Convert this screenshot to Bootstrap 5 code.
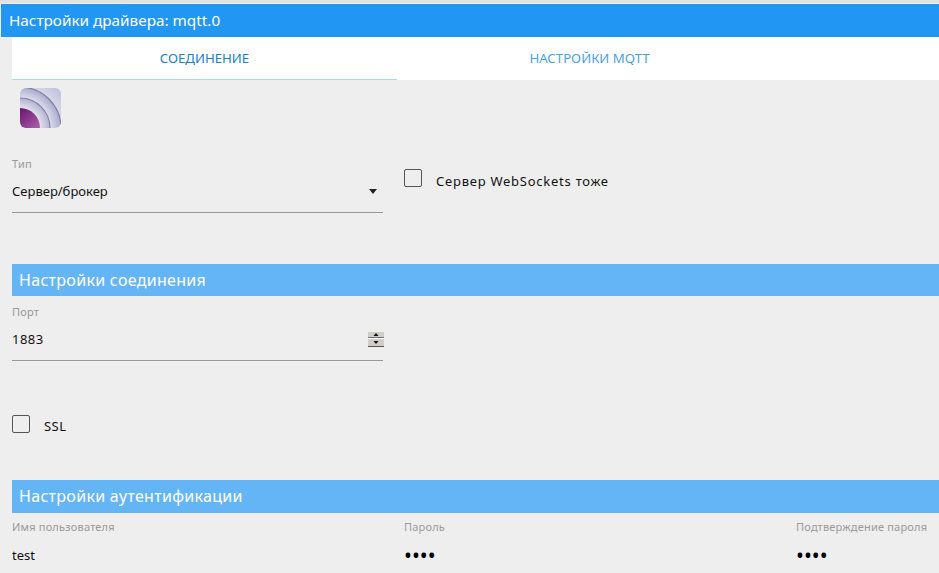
<!DOCTYPE html>
<html lang="ru">
<head>
<meta charset="utf-8">
<title>Настройки драйвера: mqtt.0</title>
<link rel="stylesheet" href="https://cdn.jsdelivr.net/npm/bootstrap@5.3.0/dist/css/bootstrap.min.css">
<style>
html,body{height:573px;overflow:hidden}
body{background:#eeeeee;font-family:"Noto Sans","Open Sans",sans-serif;color:#111;border-top:3px solid #e2e2e2;padding-top:1px}
.dlg-title{margin-left:1px;height:33px;background:#2196f3;color:#fff;font-size:15.3px;line-height:33px;padding-left:8px}
.tab-bar{margin-left:12px;height:43px;background:#fff}
.tab-item{width:385px;height:43px;line-height:42px;text-align:center;font-size:13.2px;color:#4aa3e4}
.tab-item.on{color:#1a80c8;border-bottom:1px solid #a8daf5}
.logo-box{margin:8px 0 0 20px;width:41px;height:40px;display:block}
.pad-left{padding-left:12px}
.fld{width:371px;flex:none;margin-right:21px;position:relative}
.fld-end{width:auto;flex:1 1 0;margin-right:0;min-width:0}
.fld-label{font-size:11px;line-height:14px;color:#9a9a9a;letter-spacing:.2px}
.fld-val{font-size:13px;line-height:18px;color:#111;margin-top:11px;padding-bottom:12px}
.fld-line{border-bottom:1px solid #999}
.dots{font-size:21px;line-height:18px;letter-spacing:0;color:#000}
.num-val{letter-spacing:.5px}
.arrow{position:absolute;right:6px;top:32px;width:0;height:0;border-left:4.5px solid transparent;border-right:4.5px solid transparent;border-top:5px solid #222}
.spin{position:absolute;right:-1px;top:26px;width:16px;height:16px;display:block}
.box{width:18px;height:18px;border:1px solid #555;border-radius:2px;flex:none;background:transparent}
.chk-text{font-size:13px;letter-spacing:.75px;color:#111;line-height:18px;margin-left:14px}
.ws-text{margin-top:3px}
.ssl-text{margin-top:2px;letter-spacing:.45px}
.sect{margin-left:12px;background:#64b5f6;color:#fff;font-size:16px;letter-spacing:.3px;padding-left:7px}
.row-type{margin-top:29px}
.chk-ws{margin-top:12px}
.sect-one{margin-top:51px;height:32px;line-height:32px}
.row-port{margin-top:9px}
.chk-ssl{margin-top:54px;margin-left:12px}
.sect-two{margin-top:45px;height:33px;line-height:32px}
.row-auth{margin-top:7px;white-space:nowrap}
.row-auth .fld-val{margin-top:12px}
</style>
</head>
<body>
<div class="dlg-title">Настройки драйвера: mqtt.0</div>
<div class="tab-bar d-flex">
  <div class="tab-item on">СОЕДИНЕНИЕ</div>
  <div class="tab-item">НАСТРОЙКИ MQTT</div>
</div>
<svg class="logo-box" viewBox="0 0 41 40" aria-hidden="true">
  <defs>
    <radialGradient id="lg" gradientUnits="userSpaceOnUse" cx="0" cy="40" r="58">
      <stop offset=".34" stop-color="#e2e2ee"/><stop offset=".51" stop-color="#b4b4d4"/>
      <stop offset=".52" stop-color="#dcdcec"/><stop offset=".70" stop-color="#acacd0"/>
      <stop offset=".71" stop-color="#d8d8ea"/><stop offset="1" stop-color="#babada"/>
    </radialGradient>
    <linearGradient id="pg" x1="0" y1="0" x2="1" y2="1"><stop offset="0" stop-color="#6a1270"/><stop offset="1" stop-color="#ab62ab"/></linearGradient>
    <clipPath id="rc"><rect width="41" height="40" rx="6"/></clipPath>
  </defs>
  <g clip-path="url(#rc)">
    <rect width="41" height="40" fill="url(#lg)"/>
    <circle cx="0" cy="40" r="30" fill="none" stroke="#7f7fa0" stroke-width="1.1"/>
    <circle cx="0" cy="40" r="41" fill="none" stroke="#7f7fa0" stroke-width="1.1"/>
    <path d="M0 20A20 20 0 0 1 20 40H0Z" fill="url(#pg)"/>
  </g>
</svg>
<div class="d-flex pad-left row-type">
  <div class="fld fld-line">
    <div class="fld-label">Тип</div>
    <div class="fld-val">Сервер/брокер</div>
    <span class="arrow"></span>
  </div>
  <div class="d-flex align-items-start chk-ws align-self-start">
    <span class="box"></span><span class="chk-text ws-text">Сервер WebSockets тоже</span>
  </div>
</div>
<div class="sect sect-one">Настройки соединения</div>
<div class="d-flex pad-left row-port">
  <div class="fld fld-line">
    <div class="fld-label">Порт</div>
    <div class="fld-val num-val">1883</div>
    <svg class="spin" viewBox="0 0 16 16" aria-hidden="true">
      <rect width="16" height="7" fill="#cfcdc6"/><rect y="8" width="16" height="7" fill="#cfcdc6"/>
      <rect width="16" height="1" fill="#eee"/>
      <rect y="6" width="16" height="1" fill="#6f6f6f"/><rect y="15" width="16" height="1" fill="#555"/>
      <rect y="7" width="16" height="1" fill="#fff"/>
      <path d="M8 2l2.5 3h-5z" fill="#111"/><path d="M8 13l2.5-3h-5z" fill="#111"/>
    </svg>
  </div>
</div>
<div class="d-flex align-items-start chk-ssl">
  <span class="box"></span><span class="chk-text ssl-text">SSL</span>
</div>
<div class="sect sect-two">Настройки аутентификации</div>
<div class="d-flex pad-left row-auth">
  <div class="fld"><div class="fld-label">Имя пользователя</div><div class="fld-val">test</div></div>
  <div class="fld"><div class="fld-label">Пароль</div><div class="fld-val dots">••••</div></div>
  <div class="fld fld-end"><div class="fld-label">Подтверждение пароля</div><div class="fld-val dots">••••</div></div>
</div>
<script src="https://cdn.jsdelivr.net/npm/bootstrap@5.3.0/dist/js/bootstrap.bundle.min.js"></script>
</body>
</html>
